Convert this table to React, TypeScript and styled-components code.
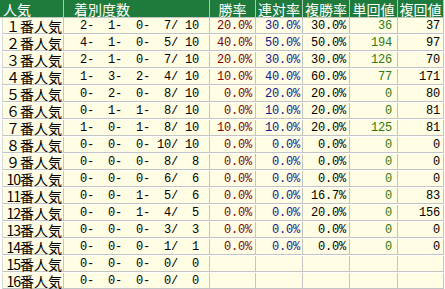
import React from 'react'
import styled, { createGlobalStyle } from 'styled-components'

const GlobalStyle = createGlobalStyle`
  html, body {
    margin: 0;
    padding: 0;
    background: #ffffff;
  }
`

const Table = styled.div`
  display: grid;
  grid-template-columns: 64px 146px 46px 47px 47px 48px 46px;
  grid-auto-rows: 17px;
  width: 444px;
`

const HeadCell = styled.div<{ align?: 'left' | 'center'; indent?: number }>`
  box-sizing: border-box;
  height: 18px;
  margin-bottom: -1px;
  padding-top: 1px;
  background: #1f7b3b;
  color: #ffffff;
  border-right: 1px solid #a9c9b0;
  border-bottom: 1px solid #c4c4c4;
  font-family: 'Noto Sans CJK JP', sans-serif;
  font-size: 14px;
  line-height: 16px;
  white-space: nowrap;
  text-align: ${({ align = 'center' }) => align};
  padding-left: ${({ indent = 0 }) => indent}px;
`

const Label = styled.div`
  box-sizing: border-box;
  margin-top: 1px;
  margin-left: 2px;
  background: #fffde3;
  border-left: 1px solid #d8d8d0;
  border-right: 1px solid #c4c4c4;
  border-bottom: 1px solid #c4c4c4;
  font-family: 'Noto Sans CJK JP', sans-serif;
  font-size: 14px;
  line-height: 16px;
  color: #000000;
  text-align: right;
  padding-right: 1px;
  white-space: nowrap;
`

// half-width rank digits (10..16) squeezed to the narrow width of the report font
const RankDigits = styled.span`
  letter-spacing: -1px;
`

const Cell = styled.div<{ tone?: string; pad?: number }>`
  box-sizing: border-box;
  margin-top: 1px;
  background: #fffde3;
  border-right: 1px solid #c4c4c4;
  border-bottom: 1px solid #c4c4c4;
  font-family: 'Liberation Mono', monospace;
  font-size: 12px;
  letter-spacing: -0.2px;
  line-height: 16px;
  color: ${({ tone = '#000000' }) => tone};
  text-align: right;
  padding-right: ${({ pad = 3 }) => pad}px;
  white-space: pre;
`

type Row = {
  rank: string
  counts: [number, number, number, number]
  win?: string
  place2?: string
  place3?: string
  winRet?: number
  placeRet?: number
}

const rows: Row[] = [
  { rank: '１', counts: [2, 1, 0, 7], win: '20.0%', place2: '30.0%', place3: '30.0%', winRet: 36, placeRet: 37 },
  { rank: '２', counts: [4, 1, 0, 5], win: '40.0%', place2: '50.0%', place3: '50.0%', winRet: 194, placeRet: 97 },
  { rank: '３', counts: [2, 1, 0, 7], win: '20.0%', place2: '30.0%', place3: '30.0%', winRet: 126, placeRet: 70 },
  { rank: '４', counts: [1, 3, 2, 4], win: '10.0%', place2: '40.0%', place3: '60.0%', winRet: 77, placeRet: 171 },
  { rank: '５', counts: [0, 2, 0, 8], win: '0.0%', place2: '20.0%', place3: '20.0%', winRet: 0, placeRet: 80 },
  { rank: '６', counts: [0, 1, 1, 8], win: '0.0%', place2: '10.0%', place3: '20.0%', winRet: 0, placeRet: 81 },
  { rank: '７', counts: [1, 0, 1, 8], win: '10.0%', place2: '10.0%', place3: '20.0%', winRet: 125, placeRet: 81 },
  { rank: '８', counts: [0, 0, 0, 10], win: '0.0%', place2: '0.0%', place3: '0.0%', winRet: 0, placeRet: 0 },
  { rank: '９', counts: [0, 0, 0, 8], win: '0.0%', place2: '0.0%', place3: '0.0%', winRet: 0, placeRet: 0 },
  { rank: '10', counts: [0, 0, 0, 6], win: '0.0%', place2: '0.0%', place3: '0.0%', winRet: 0, placeRet: 0 },
  { rank: '11', counts: [0, 0, 1, 5], win: '0.0%', place2: '0.0%', place3: '16.7%', winRet: 0, placeRet: 83 },
  { rank: '12', counts: [0, 0, 1, 4], win: '0.0%', place2: '0.0%', place3: '20.0%', winRet: 0, placeRet: 156 },
  { rank: '13', counts: [0, 0, 0, 3], win: '0.0%', place2: '0.0%', place3: '0.0%', winRet: 0, placeRet: 0 },
  { rank: '14', counts: [0, 0, 0, 1], win: '0.0%', place2: '0.0%', place3: '0.0%', winRet: 0, placeRet: 0 },
  { rank: '15', counts: [0, 0, 0, 0] },
  { rank: '16', counts: [0, 0, 0, 0] },
]

const pad = (n: number, w: number) => String(n).padStart(w, ' ')

// "%2d- %2d- %2d- %2d/%3d" like the original fixed-width report
const countText = ([a, b, c, d]: Row['counts']) => {
  const total = a + b + c + d
  return `${pad(a, 2)}- ${pad(b, 2)}- ${pad(c, 2)}- ${pad(d, 2)}/${pad(total, 3)}`
}

const rankLabel = (rank: string) =>
  /^[0-9]+$/.test(rank) ? <RankDigits>{rank}</RankDigits> : rank

export default function App() {
  return (
    <>
      <GlobalStyle />
      <Table>
        <HeadCell align="left" indent={3}>人気</HeadCell>
        <HeadCell align="left" indent={10}>着別度数</HeadCell>
        <HeadCell>勝率</HeadCell>
        <HeadCell>連対率</HeadCell>
        <HeadCell>複勝率</HeadCell>
        <HeadCell>単回値</HeadCell>
        <HeadCell>複回値</HeadCell>
        {rows.map((r) => (
          <React.Fragment key={r.rank}>
            <Label>{rankLabel(r.rank)}番人気</Label>
            <Cell pad={10}>{countText(r.counts)}</Cell>
            <Cell tone="#800000">{r.win ?? ''}</Cell>
            <Cell tone="#14148c" pad={2}>{r.place2 ?? ''}</Cell>
            <Cell>{r.place3 ?? ''}</Cell>
            <Cell tone="#2f7a12" pad={5}>{r.winRet ?? ''}</Cell>
            <Cell pad={3}>{r.placeRet ?? ''}</Cell>
          </React.Fragment>
        ))}
      </Table>
    </>
  )
}
